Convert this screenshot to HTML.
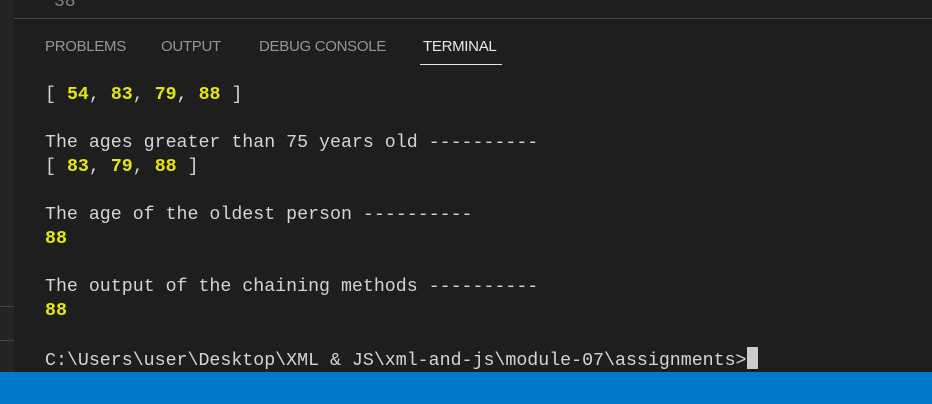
<!DOCTYPE html><html><head><style>
body{margin:0;width:932px;height:404px;background:#1e1e1e;position:relative;overflow:hidden;font-family:"Liberation Sans",sans-serif}
.side{position:absolute;left:0;top:0;width:14px;height:372px;background:#252526}
.sl{position:absolute;left:0;width:14px;height:1px;background:#444}
.top{position:absolute;left:14px;right:0;top:18px;height:1px;background:#454545}
.ln{position:absolute;left:54px;top:-8px;color:#858585;font-family:"Liberation Mono",monospace;font-size:18px}
.tab{position:absolute;top:38px;font-size:15px;color:#969696;letter-spacing:-0.3px}
.term{position:absolute;left:45px;top:83px;font-family:"Liberation Mono",monospace;font-size:18.28px;line-height:24px;color:#d4d4d4;white-space:pre}
.y{color:#e5e510;font-weight:bold}
.status{position:absolute;left:0;top:372px;width:932px;height:32px;background:#007acc}
.cur{display:inline-block;width:11px;height:22px;background:#ccc;vertical-align:-4px}
</style></head><body>
<div class="side"></div><div class="sl" style="top:306px"></div><div class="sl" style="top:340px"></div>
<div class="top"></div>
<div class="ln">38</div>
<div class="tab" style="left:45px">PROBLEMS</div>
<div class="tab" style="left:161px">OUTPUT</div>
<div class="tab" style="left:259px">DEBUG CONSOLE</div>
<div class="tab" style="left:423px;color:#e7e7e7">TERMINAL</div>
<div style="position:absolute;left:420px;top:64px;width:82px;height:1px;background:#e7e7e7"></div>
<div class="term">[ <span class="y">54</span>, <span class="y">83</span>, <span class="y">79</span>, <span class="y">88</span> ]

The ages greater than 75 years old ----------
[ <span class="y">83</span>, <span class="y">79</span>, <span class="y">88</span> ]

The age of the oldest person ----------
<span class="y">88</span>

The output of the chaining methods ----------
<span class="y">88</span>

C:\Users\user\Desktop\XML &amp; JS\xml-and-js\module-07\assignments&gt;<span class="cur"></span></div>
<div class="status"></div>
</body></html>
